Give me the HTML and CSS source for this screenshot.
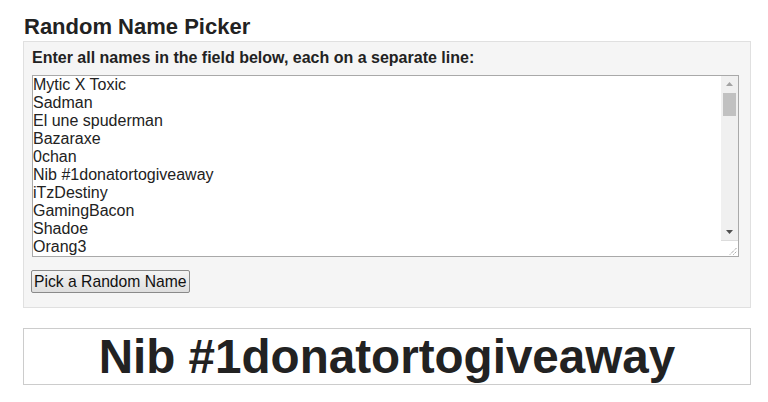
FILE: index.html
```html
<!DOCTYPE html>
<html lang="en">
<head>
  <meta charset="UTF-8" />
  <title>Random Name Picker</title>
  <link rel="stylesheet" href="styles.css">
</head>
<body>
  <div class="page">
    <h1>Random Name Picker</h1>

    <div class="panel">
      <label for="names">Enter all names in the field below, each on a separate line:</label>
      <div class="field">
        <textarea id="names" rows="10" spellcheck="false">Mytic X Toxic
Sadman
El une spuderman
Bazaraxe
0chan
Nib #1donatortogiveaway
iTzDestiny
GamingBacon
Shadoe
Orang3
PixelPanda
Noodle
xXSniperXx
Kraken77
LunaTic
Frostbyte
ToastyBoi
Zephyr
Mr Wobbles
DarkMatter
Blaze
Captain Crunch
Vortex
JellyBean
Sir Reginald
QuietStorm
Nova
Kibbles
Wraith
Tater Tot
Glitch
Mango
ShadowFox
Pickles
Echo
Rusty
Neon Ninja
Biscuit
Phantom
Waffle
Cosmo
Turbo
Spud
Viper
Maple
Rogue
Doodle
Hex
Pudding
Onyx
Sprocket
Ziggy
Ember
Taco
Bolt
Muffin
Raven
Nugget
Sparky
Pebbles
Jinx
Yeti</textarea>
        <!-- drawn scrollbar, the headless browser hides the real one -->
        <div class="scrollbar">
          <div class="sb-btn">
            <svg width="7" height="4" viewBox="0 0 7 4"><path d="M3.5 0L7 4H0z" fill="#a3a3a3"/></svg>
          </div>
          <div class="sb-track"><div class="sb-thumb"></div></div>
          <div class="sb-btn">
            <svg width="7" height="4" viewBox="0 0 7 4"><path d="M0 0H7L3.5 4z" fill="#505050"/></svg>
          </div>
          <div class="sb-corner">
            <svg width="8" height="8" viewBox="0 0 8 8">
              <path d="M1 7.5L7.5 1M4.5 7.5L7.5 4.5" stroke="#7a7a7a" stroke-width="1" stroke-dasharray="1 1"/>
            </svg>
          </div>
        </div>
      </div>
      <button class="pick-btn" onclick="pickName()">Pick a Random Name</button>
    </div>

    <div class="result" id="result">Nib #1donatortogiveaway</div>
  </div>

  <script>
    function pickName() {
      const names = document.getElementById('names').value
        .split('\n')
        .map(n => n.trim())
        .filter(n => n);
      if (!names.length) return;
      const pick = names[Math.floor(Math.random() * names.length)];
      document.getElementById('result').textContent = pick;
    }
  </script>
</body>
</html>
```

FILE: styles.css
```css
body {
  margin: 0;
  font-family: Arial, "Liberation Sans", sans-serif;
  color: #222;
  background: #fff;
}

.page {
  padding: 14px 17px 0 23px;
}

h1 {
  font-size: 22px;
  line-height: 25px;
  margin: 0 0 2px 1px;
}

.panel {
  background: #f5f5f5;
  border: 1px solid #e0e0e0;
  padding: 7px 11px 14px 8px;
}

.panel label {
  display: block;
  font-size: 16px;
  font-weight: bold;
  line-height: 18px;
  margin-bottom: 8px;
}

.field {
  position: relative;
}

textarea {
  display: block;
  box-sizing: border-box;
  width: 100%;
  height: 182px;
  margin: 0;
  padding: 0 18px 0 0;
  border: 1px solid #a9a9a9;
  font-family: Arial, "Liberation Sans", sans-serif;
  font-size: 16px;
  line-height: 18px;
  color: #222;
  background: #fff;
  resize: none;
  overflow-y: scroll;
  scrollbar-width: none;
}

.scrollbar {
  position: absolute;
  top: 1px;
  right: 1px;
  bottom: 1px;
  width: 17px;
  display: flex;
  flex-direction: column;
  pointer-events: none;
}

.sb-btn {
  height: 16px;
  background: #f0f0f0;
  display: flex;
  align-items: center;
  justify-content: center;
}

.sb-track {
  flex: 1;
  background: #f0f0f0;
  padding: 1px 2px 0;
}

.sb-thumb {
  height: 23px;
  background: #c1c1c1;
}

.sb-corner {
  height: 16px;
  background: #fff;
  border-top: 1px solid #dcdcdc;
  display: flex;
  align-items: flex-end;
  justify-content: flex-end;
  padding: 0 1px 1px 0;
  box-sizing: border-box;
}

.sb-corner svg { display: block; }

.pick-btn {
  margin: 13px 0 0 -1px;
  padding: 1px 2px;
  font-family: Arial, "Liberation Sans", sans-serif;
  font-size: 15.7px;
  line-height: 19px;
  color: #111;
  background: linear-gradient(#f4f4f4, #dedede);
  border: 1px solid #8a8a8a;
  border-radius: 2px;
  cursor: pointer;
}

.pick-btn:hover { background: linear-gradient(#eaf6fd, #d9f0fc); border-color: #3c7fb1; }

.result {
  margin-top: 20px;
  border: 1px solid #ccc;
  font-size: 47.6px;
  font-weight: bold;
  line-height: 55px;
  text-align: center;
  color: #222;
}
```
